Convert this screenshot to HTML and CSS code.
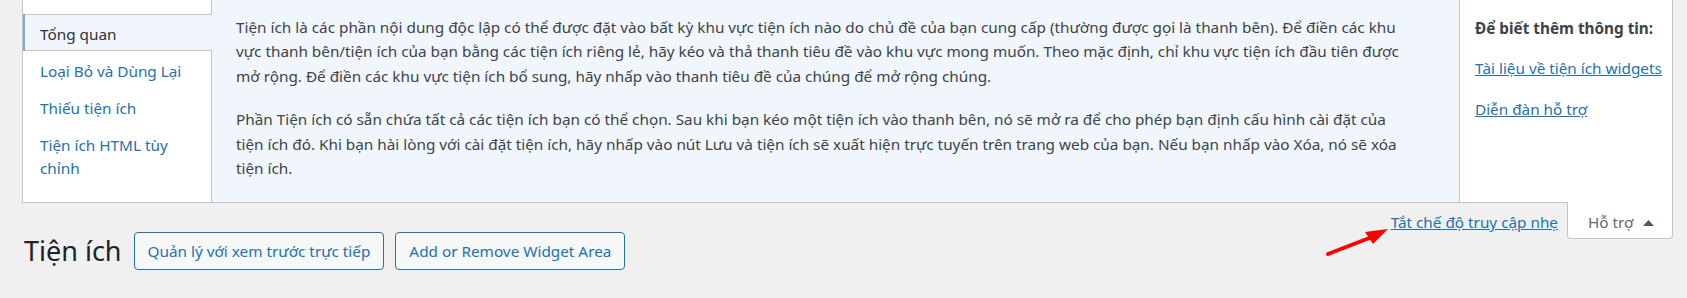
FILE: index.html
```html
<!DOCTYPE html>
<html lang="vi">
<head>
<meta charset="utf-8">
<title>Tiện ích</title>
<link rel="stylesheet" href="styles.css">
</head>
<body>
<div class="screen-meta">
  <div class="help-tabs">
    <ul>
      <li class="active"><a href="#">Tổng quan</a></li>
      <li><a href="#">Loại Bỏ và Dùng Lại</a></li>
      <li><a href="#">Thiếu tiện ích</a></li>
      <li><a href="#">Tiện ích HTML tùy chỉnh</a></li>
    </ul>
  </div>
  <div class="help-content">
    <p>Tiện ích là các phần nội dung độc lập có thể được đặt vào bất kỳ khu vực tiện ích nào do chủ đề của bạn cung cấp (thường được gọi là thanh bên). Để điền các khu vực thanh bên/tiện ích của bạn bằng các tiện ích riêng lẻ, hãy kéo và thả thanh tiêu đề vào khu vực mong muốn. Theo mặc định, chỉ khu vực tiện ích đầu tiên được mở rộng. Để điền các khu vực tiện ích bổ sung, hãy nhấp vào thanh tiêu đề của chúng để mở rộng chúng.</p>
    <p>Phần Tiện ích có sẵn chứa tất cả các tiện ích bạn có thể chọn. Sau khi bạn kéo một tiện ích vào thanh bên, nó sẽ mở ra để cho phép bạn định cấu hình cài đặt của tiện ích đó. Khi bạn hài lòng với cài đặt tiện ích, hãy nhấp vào nút Lưu và tiện ích sẽ xuất hiện trực tuyến trên trang web của bạn. Nếu bạn nhấp vào Xóa, nó sẽ xóa tiện ích.</p>
  </div>
  <div class="help-sidebar">
    <p><strong>Để biết thêm thông tin:</strong></p>
    <p><a href="#">Tài liệu về tiện ích widgets</a></p>
    <p><a href="#">Diễn đàn hỗ trợ</a></p>
  </div>
</div>
<div class="below">
  <div class="title-row">
    <h1 class="page-title">Tiện ích</h1>
    <a class="title-action" href="#">Quản lý với xem trước trực tiếp</a>
    <a class="title-action" href="#">Add or Remove Widget Area</a>
  </div>
  <div class="meta-links">
    <a class="a11y-link" href="#">Tắt chế độ truy cập nhẹ</a>
    <button class="help-toggle" type="button">Hỗ trợ<svg class="caret" width="11" height="6" viewBox="0 0 11 6" aria-hidden="true"><polygon points="5.5,0 11,6 0,6" fill="#50575e"/></svg></button>
  </div>
</div>
<svg class="annot-arrow" width="1687" height="298" viewBox="0 0 1687 298" aria-hidden="true">
  <line x1="1328" y1="254" x2="1372" y2="237" stroke="#ff0000" stroke-width="4" stroke-linecap="round"/>
  <polygon points="1388,229 1365,232 1373,244" fill="#ff0000"/>
</svg>
</body>
</html>
```
FILE: styles.css
```css
* { box-sizing: border-box; }
html, body { margin: 0; padding: 0; }
body {
  background: #f0f0f1;
  color: #3c434a;
  font-family: "Noto Sans", "Open Sans", sans-serif;
  font-size: 15.3px;
  width: 1687px;
  height: 298px;
  overflow: hidden;
  position: relative;
}
a { color: #2271b1; }

.screen-meta {
  margin-left: 22px;
  width: 1651px;
  min-height: 203px;
  display: flex;
  background: #fff;
  border: 1px solid #c3c4c7;
  border-top: 0;
}

.help-tabs {
  width: 189px;
  flex: none;
  border-right: 1px solid #c3c4c7;
  padding-top: 14px;
}
.help-tabs ul { list-style: none; margin: 0; padding: 0; }
.help-tabs li {
  border-left: 2px solid transparent;
}
.help-tabs a {
  display: block;
  padding: 8px 6px 4px 15px;
  line-height: 23px;
  text-decoration: none;
  border-top: 1px solid transparent;
  border-bottom: 1px solid transparent;
}
.help-tabs li.active {
  border-left-color: #72aee6;
  background: #f0f6fc;
  margin-right: -1px;
  position: relative;
}
.help-tabs li.active a {
  color: #2c3338;
  border-color: #c3c4c7;
}

.help-content {
  flex: 1;
  background: #f0f6fc;
  padding: 0 42px 0 24px;
}
.help-content p {
  margin: 15px 0 19px;
  line-height: 24.4px;
}

.help-sidebar {
  width: 213px;
  flex: none;
  border-left: 1px solid #c3c4c7;
  padding: 0 0 0 15px;
}
.help-sidebar p {
  margin: 16px 0;
  line-height: 24.4px;
  white-space: nowrap;
}
.help-sidebar strong { font-weight: 700; color: #3c434a; }

.below {
  margin-left: 22px;
  width: 1651px;
  display: flex;
  justify-content: space-between;
  align-items: flex-start;
}
.title-row {
  margin-top: 29px;
  display: flex;
  align-items: center;
  gap: 11px;
}
.page-title {
  margin: 0 1px 0 2px;
  font-size: 27px;
  font-weight: 400;
  color: #1d2327;
  line-height: 38px;
}
.title-action {
  display: block;
  height: 38px;
  line-height: 36px;
  padding: 0 13px;
  border: 1px solid #2271b1;
  border-radius: 4px;
  background: #f6f7f7;
  color: #2271b1;
  text-decoration: none;
  white-space: nowrap;
}

.meta-links {
  display: flex;
  align-items: flex-start;
}
.a11y-link {
  margin-top: 7px;
  margin-right: 9px;
  line-height: 24px;
}
.help-toggle {
  margin-top: -1px;
  width: 106px;
  height: 37px;
  padding: 8px 0 4px 20px;
  display: flex;
  align-items: center;
  background: #fff;
  border: 1px solid #c3c4c7;
  border-top: 0;
  border-radius: 0 0 4px 4px;
  font-family: inherit;
  font-size: 15.3px;
  line-height: 24px;
  color: #646970;
}
.caret {
  margin-left: 9px;
  margin-top: 1px;
  flex: none;
}

.annot-arrow {
  position: absolute;
  left: 0;
  top: 0;
  pointer-events: none;
}
```
